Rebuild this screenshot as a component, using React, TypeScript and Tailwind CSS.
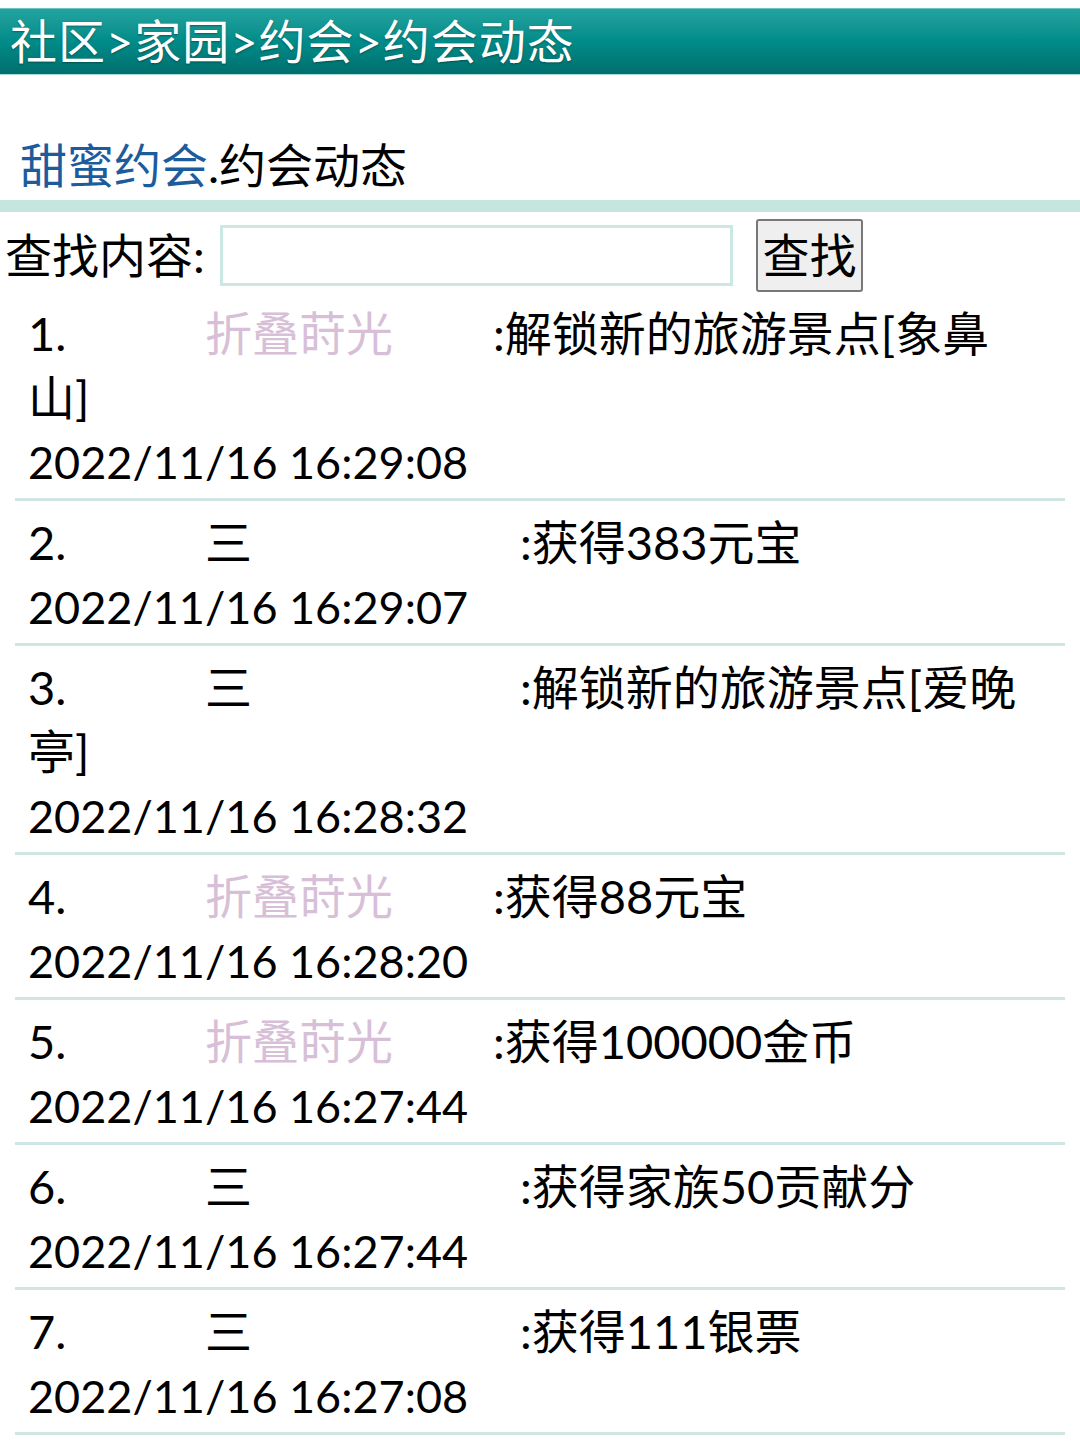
import React from 'react'

type Entry = {
  name: string
  action: string
  time: string
}

const entries: Entry[] = [
  { name: '折叠莳光', action: '解锁新的旅游景点[象鼻山]', time: '2022/11/16 16:29:08' },
  { name: '三', action: '获得383元宝', time: '2022/11/16 16:29:07' },
  { name: '三', action: '解锁新的旅游景点[爱晚亭]', time: '2022/11/16 16:28:32' },
  { name: '折叠莳光', action: '获得88元宝', time: '2022/11/16 16:28:20' },
  { name: '折叠莳光', action: '获得100000金币', time: '2022/11/16 16:27:44' },
  { name: '三', action: '获得家族50贡献分', time: '2022/11/16 16:27:44' },
  { name: '三', action: '获得111银票', time: '2022/11/16 16:27:08' },
]

const App = () => {
  return (
    <div className="w-[1080px] min-h-[1447px] bg-white text-black text-[47px] font-['Lato','Noto_Sans_CJK_SC',sans-serif]">
      {/* Breadcrumb bar */}
      <div className="pt-[8px]">
        <div className="h-[67px] flex items-center pl-[10px] tracking-[1px] border-t border-b border-t-[#6cc4c2] border-b-[#a6dcda] bg-gradient-to-b from-[#22a3a0] via-[#008c89] to-[#006f6e] text-white leading-none [text-shadow:0_1px_2px_rgba(0,0,0,0.35)]">
          社区&gt;家园&gt;约会&gt;约会动态
        </div>
      </div>

      {/* Title */}
      <div className="mt-[59px] pl-[20px] leading-[63px]">
        <span className="text-[#1d5c9c]">甜蜜约会</span>.约会动态
      </div>
      <div className="mt-[3px] h-[12px] bg-[#c6e5df]" />

      {/* Search */}
      <div className="mt-[7px] flex items-center h-[73px]">
        <span className="w-[220px] pl-[5px] leading-none">查找内容:</span>
        <input
          type="text"
          className="w-[513px] h-[61px] border-[3px] border-[#cce8e2] outline-none bg-white"
        />
        <button className="ml-[23px] w-[107px] h-[73px] border-2 border-[#787878] rounded-[3px] bg-[#efefef] leading-none">
          查找
        </button>
      </div>

      {/* Activity list */}
      <div>
        {entries.map((e, i) => (
          <div
            key={i}
            className="mx-[15px] pl-[13px] pr-[39px] pt-[9px] pb-[4px] border-b-[3px] border-[#cfe6e2] leading-[64px]"
          >
            <span className="inline-block w-[177px]">{i + 1}.</span>
            <span
              className={
                e.name === '三'
                  ? 'inline-block w-[315px] text-black'
                  : 'inline-block w-[288px] text-[#d8bfd8]'
              }
            >
              {e.name}
            </span>
            :{e.action}
            <br />
            <span className="text-[45px]">{e.time}</span>
          </div>
        ))}
      </div>
    </div>
  )
}

export default App
